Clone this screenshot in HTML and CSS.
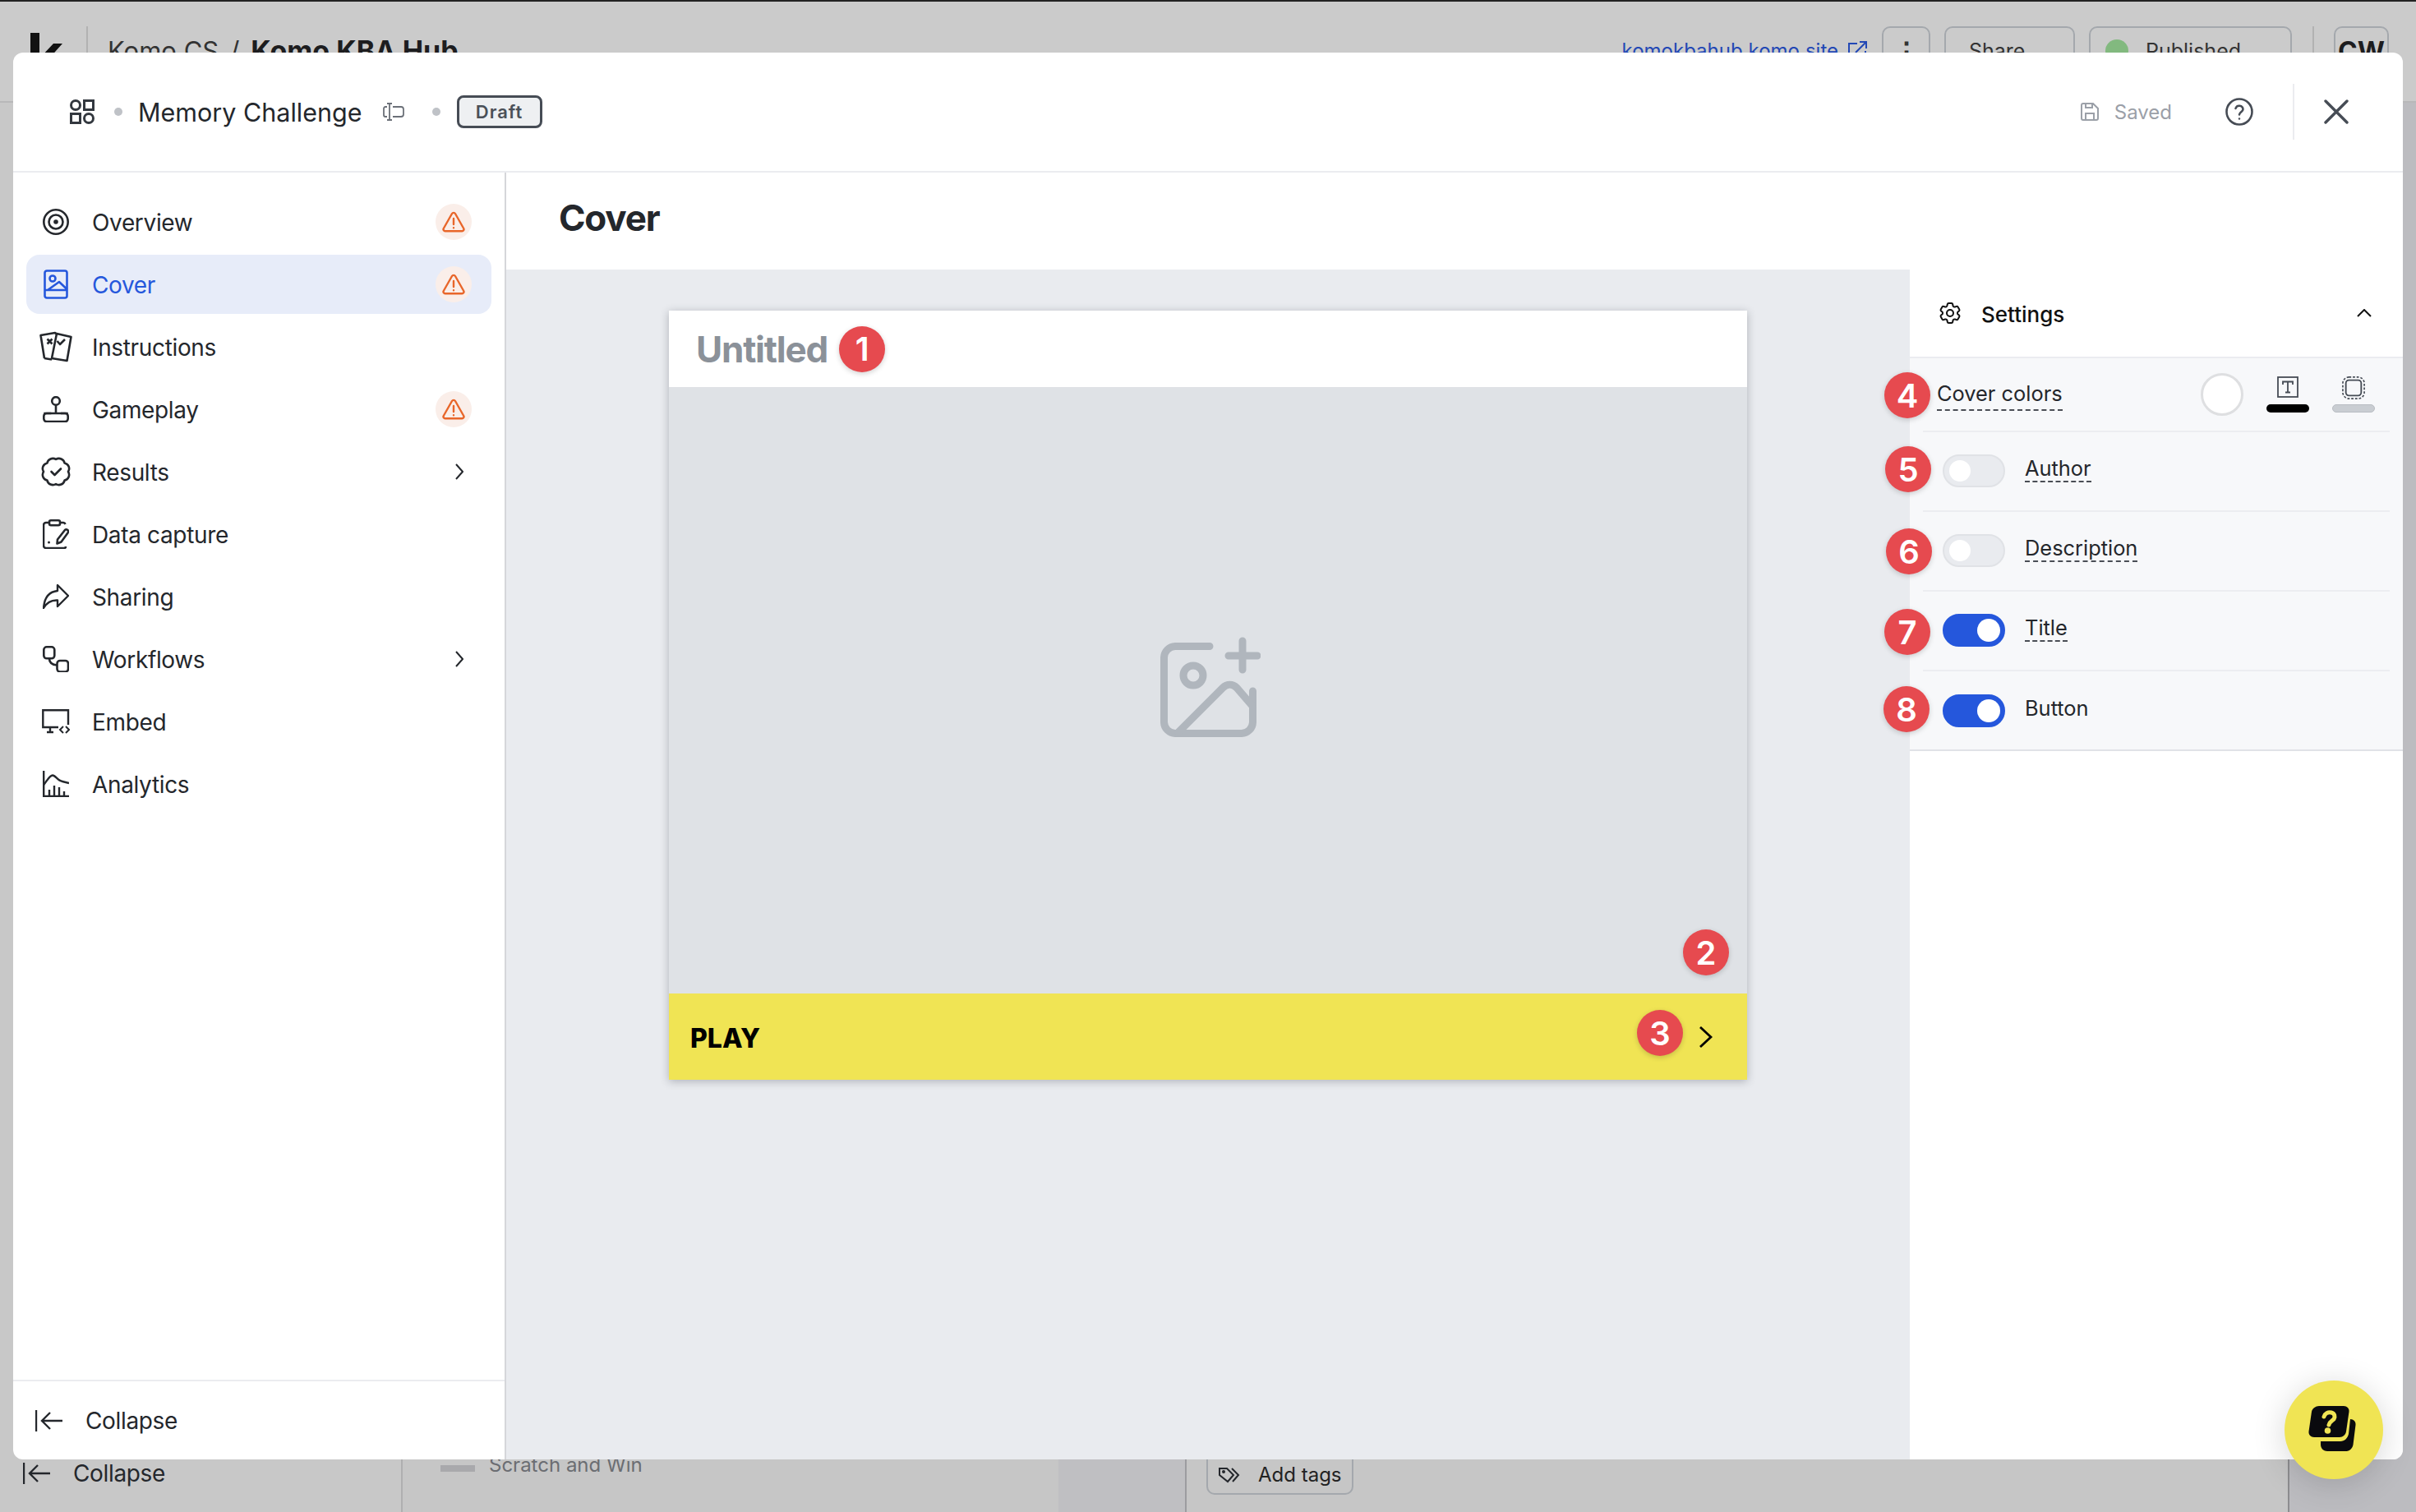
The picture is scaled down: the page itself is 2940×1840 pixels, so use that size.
FILE: index.html
```html
<!DOCTYPE html>
<html>

<head>
    <meta charset="UTF-8">
    <title>Memory Challenge - Cover</title>
    <link rel="stylesheet" href="styles.css">
</head>

<body>

<!-- page behind the dialog, dimmed -->
<div class="back">
    <div class="back-top">
        <svg class="back-logo" width="40" height="60" viewBox="0 0 40 60"><rect x="0" y="0" width="11" height="50" fill="#111"/><path d="M12 30 L28 13 L39 13 L22 32 L39 50 L28 50 Z" fill="#111"/></svg>
        <div class="back-divider"></div>
        <span class="crumb">Komo CS</span>
        <span class="crumb crumb-sep">/</span>
        <span class="crumb crumb-bold">Komo KBA Hub</span>
        <span class="back-link">komokbahub.komo.site</span>
        <svg class="back-ext" width="24" height="24" viewBox="0 0 24 24" fill="none" stroke="#2348b5" stroke-width="2"><path d="M12 3H2v20h20V12M10 14 22 2M15 1h8v8"/></svg>
        <div class="back-btn back-dots">⋮</div>
        <div class="back-btn back-share">Share</div>
        <div class="back-btn back-pub"><span class="pub-dot"></span>Published</div>
        <div class="back-divider back-divider-r"></div>
        <div class="back-btn back-cw">CW</div>
    </div>
    <div class="back-body">
        <div class="back-col back-side">
            <div class="collapse">
                <svg width="34" height="26" viewBox="0 0 34 26" fill="none" stroke="#24272c" stroke-width="2.4"><path d="M1 0v26M33 13H9M18 3 8 13l10 10"/></svg>
                <span>Collapse</span>
            </div>
        </div>
        <div class="back-col back-list">
            <span class="list-thumb"></span><span class="list-name">Scratch and Win</span>
        </div>
        <div class="back-col back-gap"></div>
        <div class="back-col back-main">
            <div class="add-tags">
                <svg width="26" height="20" viewBox="0 0 26 20" fill="none" stroke="#24272c" stroke-width="2"><path d="M1 2h9l8 8-7 8-10-8zM16 2l8 8-7 8"/><circle cx="6" cy="6" r="1" fill="#24272c"/></svg>
                <span>Add tags</span>
            </div>
        </div>
        <div class="back-col back-right"></div>
    </div>
</div>

<div class="modal">
    <div class="modal-head">
        <svg class="apps-icon" width="30" height="30" viewBox="0 0 30 30" fill="none" stroke="#33383f" stroke-width="3"><circle cx="7" cy="7" r="5.5"/><rect x="17.5" y="1.5" width="11" height="11"/><rect x="1.5" y="17.5" width="11" height="11"/><circle cx="23" cy="23" r="5.5"/></svg>
        <span class="head-dot"></span>
        <span class="game-name">Memory Challenge</span>
        <svg class="rename-icon" width="26" height="22" viewBox="0 0 26 22" fill="none" stroke="#6b7078" stroke-width="1.8"><path d="M5 5H3a2 2 0 0 0-2 2v8a2 2 0 0 0 2 2h2M12 5h10a3 3 0 0 1 3 3v6a3 3 0 0 1-3 3H12M5 1h6M8 1v20M5 21h6"/></svg>
        <span class="head-dot head-dot-2"></span>
        <span class="draft">Draft</span>
        <div class="head-right">
            <svg width="22" height="22" viewBox="0 0 22 22" fill="none" stroke="#9ba0a8" stroke-width="2"><path d="M1 3a2 2 0 0 1 2-2h12l6 6v12a2 2 0 0 1-2 2H3a2 2 0 0 1-2-2zM6 21v-8h10v8M6 1v5h8V1"/></svg>
            <span class="saved">Saved</span>
            <svg class="help-icon" width="34" height="34" viewBox="0 0 34 34" fill="none" stroke="#464c55" stroke-width="2.6"><circle cx="17" cy="17" r="15.5"/><path d="M12.5 13a4.6 4.6 0 0 1 9 1c0 3-4.500 3.500-4.500 6.500" stroke-linecap="round"/><circle cx="17" cy="25.500" r="1.200" fill="#464c55" stroke="none"/></svg>
            <div class="head-divider"></div>
            <svg class="close-icon" width="30" height="30" viewBox="0 0 30 30" fill="none" stroke="#464c55" stroke-width="3.4" stroke-linecap="round"><path d="M2 2l26 26M28 2 2 28"/></svg>
        </div>
    </div>

    <div class="modal-body">
        <div class="sidebar">
            <div class="nav">
                <div class="nav-row">
                    <span class="nav-icon"><svg width="32" height="32" viewBox="0 0 32 32" fill="none" stroke="#24272c" stroke-width="2.600"><circle cx="16" cy="16" r="14.700"/><circle cx="16" cy="16" r="8.500"/><circle cx="16" cy="16" r="2.800" fill="#24272c" stroke="none"/></svg></span>
                    <span class="nav-text">Overview</span>
                    <span class="warn"><svg width="28" height="26" viewBox="0 0 28 26" fill="none" stroke="#e8662a" stroke-width="2.400" stroke-linecap="round" stroke-linejoin="round"><path d="M12 3 1.800 21a2.200 2.200 0 0 0 2 3.300h20.400a2.200 2.200 0 0 0 2-3.300L16 3a2.300 2.300 0 0 0-4 0zM14 9v7M14 20.200v.1"/></svg></span>
                </div>
                <div class="nav-row nav-active">
                    <span class="nav-icon"><svg width="30" height="36" viewBox="0 0 30 36" fill="none" stroke="#2557dc" stroke-width="2.600" stroke-linejoin="round"><rect x="1.500" y="1.500" width="27" height="33" rx="2.500"/><circle cx="11" cy="11" r="3.500"/><path d="M1.500 25h27M5 25 19 15l9.500 9"/></svg></span>
                    <span class="nav-text">Cover</span>
                    <span class="warn"><svg width="28" height="26" viewBox="0 0 28 26" fill="none" stroke="#e8662a" stroke-width="2.400" stroke-linecap="round" stroke-linejoin="round"><path d="M12 3 1.800 21a2.200 2.200 0 0 0 2 3.300h20.400a2.200 2.200 0 0 0 2-3.300L16 3a2.300 2.300 0 0 0-4 0zM14 9v7M14 20.200v.1"/></svg></span>
                </div>
                <div class="nav-row">
                    <span class="nav-icon"><svg width="40" height="38" viewBox="0 0 40 38" fill="none" stroke="#24272c" stroke-width="2.600" stroke-linejoin="round"><path d="M6 33 1.500 5 19 2l2 2M21 3l17.500 4-5 29L15 33zM6 33l9 1.500"/><path d="M9.500 9.500l6 6M15.500 9.500l-6 6M21.500 12l3.500 4 6-6"/></svg></span>
                    <span class="nav-text">Instructions</span>
                </div>
                <div class="nav-row">
                    <span class="nav-icon"><svg width="32" height="32" viewBox="0 0 32 32" fill="none" stroke="#24272c" stroke-width="2.600"><circle cx="16" cy="6" r="4.800"/><path d="M16 11v9"/><rect x="1.300" y="21" width="29.400" height="10" rx="3.500"/><path d="M1.300 21h9M22 21h8.700"/></svg></span>
                    <span class="nav-text">Gameplay</span>
                    <span class="warn"><svg width="28" height="26" viewBox="0 0 28 26" fill="none" stroke="#e8662a" stroke-width="2.400" stroke-linecap="round" stroke-linejoin="round"><path d="M12 3 1.800 21a2.200 2.200 0 0 0 2 3.300h20.400a2.200 2.200 0 0 0 2-3.300L16 3a2.300 2.300 0 0 0-4 0zM14 9v7M14 20.200v.1"/></svg></span>
                </div>
                <div class="nav-row">
                    <span class="nav-icon"><svg width="36" height="36" viewBox="0 0 36 36" fill="none" stroke="#24272c" stroke-width="2.600" stroke-linejoin="round"><path d="M18 3A7 7 0 0 1 28.600 7.400A7 7 0 0 1 33 18A7 7 0 0 1 28.600 28.600A7 7 0 0 1 18 33A7 7 0 0 1 7.400 28.600A7 7 0 0 1 3 18A7 7 0 0 1 7.400 7.400A7 7 0 0 1 18 3Z"/><path d="M12.500 18l4 4 7.500-7.500" stroke-linecap="round"/></svg></span>
                    <span class="nav-text">Results</span>
                    <svg class="nav-chev" width="10" height="20" viewBox="0 0 10 20" fill="none" stroke="#24272c" stroke-width="2"><path d="M1 1l8 9-8 9"/></svg>
                </div>
                <div class="nav-row">
                    <span class="nav-icon"><svg width="32" height="36" viewBox="0 0 32 36" fill="none" stroke="#24272c" stroke-width="2.600" stroke-linejoin="round"><rect x="8" y="1.300" width="13" height="6" rx="2"/><path d="M8 4H4a3 3 0 0 0-3 3v25a3 3 0 0 0 3 3h22a2 2 0 0 0 2-2M21 4h4a3 3 0 0 1 2.500 2M1 33"/><path d="M27 13c2-2 5.500 1 3.500 3.500l-8 11-5 2 .5-5z"/><path d="M7.500 28v.1" stroke-linecap="round" stroke-width="3"/></svg></span>
                    <span class="nav-text">Data capture</span>
                </div>
                <div class="nav-row">
                    <span class="nav-icon"><svg width="32" height="30" viewBox="0 0 32 30" fill="none" stroke="#24272c" stroke-width="2.400" stroke-linejoin="round"><path d="M18 1v7C8 9 2 16 1 29c4-7 9-10 17-9.500V27L31 14z"/></svg></span>
                    <span class="nav-text">Sharing</span>
                </div>
                <div class="nav-row">
                    <span class="nav-icon"><svg width="32" height="32" viewBox="0 0 32 32" fill="none" stroke="#24272c" stroke-width="2.600"><rect x="1.300" y="1.300" width="13" height="14" rx="3.500"/><rect x="17.500" y="18" width="13.500" height="13.500" rx="3.500"/><path d="M8 15.500c0 5 3 7.500 9.500 8"/></svg></span>
                    <span class="nav-text">Workflows</span>
                    <svg class="nav-chev" width="10" height="20" viewBox="0 0 10 20" fill="none" stroke="#24272c" stroke-width="2"><path d="M1 1l8 9-8 9"/></svg>
                </div>
                <div class="nav-row">
                    <span class="nav-icon"><svg width="34" height="30" viewBox="0 0 34 30" fill="none" stroke="#24272c" stroke-width="2.400"><path d="M32 19V1.300H1.300V22H20M10 22V28M6 28h8"/><path d="M26 21l-4 4 4 4M29 21l4 4-4 4" stroke-width="2"/></svg></span>
                    <span class="nav-text">Embed</span>
                </div>
                <div class="nav-row">
                    <span class="nav-icon"><svg width="32" height="32" viewBox="0 0 32 32" fill="none" stroke="#24272c" stroke-width="2.400"><path d="M1.200 0v31h31"/><path d="M1.200 17C6 11 8.500 5.500 12 5.500S18 12 24 13l8 2"/><path d="M8 31v-8M14 31V18M20 31v-11M26 31v-6"/></svg></span>
                    <span class="nav-text">Analytics</span>
                </div>
            </div>
            <div class="side-foot">
                <svg width="34" height="26" viewBox="0 0 34 26" fill="none" stroke="#24272c" stroke-width="2.400"><path d="M1 0v26M33 13H9M18 3 8 13l10 10"/></svg>
                <span>Collapse</span>
            </div>
        </div>

        <div class="main">
            <div class="main-title">Cover</div>
            <div class="main-body">
                <div class="canvas">
                    <div class="card">
                        <div class="card-head">
                            <span class="card-title">Untitled</span>
                            <span class="num">1</span>
                        </div>
                        <div class="card-image">
                            <svg width="122" height="122" viewBox="0 0 122 122" fill="none" stroke="#b0b6bd" stroke-width="9" stroke-linecap="round" stroke-linejoin="round"><path d="M60 11.500H18A14 14 0 0 0 4.500 25V104A14 14 0 0 0 18 117.500H99A14 14 0 0 0 112.500 104V66"/><circle cx="40" cy="47" r="12"/><path d="M100 5V40M83 23H118"/><path d="M22 116 76 62c5-5 12-5 17 0L112 84"/></svg>
                            <span class="num num-2">2</span>
                        </div>
                        <div class="card-bar">
                            <span class="play">PLAY</span>
                            <span class="num num-3">3</span>
                            <svg width="16" height="26" viewBox="0 0 16 26" fill="none" stroke="#000" stroke-width="2.800"><path d="M1 1l13 12L1 25"/></svg>
                        </div>
                    </div>
                </div>

                <div class="panel">
                    <div class="panel-head">
                        <svg width="32" height="32" viewBox="0 0 24 24" fill="none" stroke="#111" stroke-width="1.500"><path d="M9.594 3.940c.09-.542.56-.94 1.110-.94h2.593c.55 0 1.020.398 1.110.94l.213 1.281c.063.374.313.686.645.87.074.04.147.083.22.127.325.196.72.257 1.075.124l1.217-.456a1.125 1.125 0 0 1 1.370.49l1.296 2.247a1.125 1.125 0 0 1-.26 1.431l-1.003.827c-.293.241-.438.613-.43.992a7.723 7.723 0 0 1 0 .255c-.008.378.137.75.43.991l1.004.827c.424.35.534.955.26 1.430l-1.298 2.247a1.125 1.125 0 0 1-1.369.491l-1.217-.456c-.355-.133-.75-.072-1.076.124a6.470 6.470 0 0 1-.22.128c-.331.183-.581.495-.644.869l-.213 1.281c-.09.543-.56.94-1.110.94h-2.594c-.55 0-1.019-.398-1.110-.94l-.213-1.281c-.062-.374-.312-.686-.644-.87a6.520 6.520 0 0 1-.22-.127c-.325-.196-.72-.257-1.076-.124l-1.217.456a1.125 1.125 0 0 1-1.369-.49l-1.297-2.247a1.125 1.125 0 0 1 .26-1.431l1.004-.827c.292-.24.437-.613.43-.991a6.932 6.932 0 0 1 0-.255c.007-.38-.138-.751-.43-.992l-1.004-.827a1.125 1.125 0 0 1-.26-1.430l1.297-2.247a1.125 1.125 0 0 1 1.370-.491l1.216.456c.356.133.751.072 1.076-.124.072-.044.146-.086.22-.128.332-.183.582-.495.644-.869l.214-1.280Z"/><circle cx="12" cy="12" r="3"/></svg>
                        <span class="panel-name">Settings</span>
                        <svg class="panel-chev" width="18" height="10" viewBox="0 0 18 10" fill="none" stroke="#111" stroke-width="2"><path d="M1 9l8-8 8 8"/></svg>
                    </div>
                    <div class="rows">
                        <div class="row row-colors">
                            <span class="num num-side num-4">4</span>
                            <span class="label label-dash">Cover colors</span>
                            <span class="swatch-circle"></span>
                            <div class="swatch">
                                <svg width="26" height="26" viewBox="0 0 26 26" fill="none" stroke="#464c55" stroke-width="1.800"><rect x="1" y="1" width="24" height="24"/><path d="M7 10V6.500h12V10M13 6.500v13M10 19.500h6"/></svg>
                                <span class="swatch-bar"></span>
                            </div>
                            <div class="swatch">
                                <svg width="28" height="28" viewBox="0 0 30 30" fill="none" stroke="#464c55"><rect x="1" y="1" width="28" height="28" rx="8" stroke-width="1.800" stroke-dasharray="3 2"/><rect x="5" y="5" width="20" height="20" rx="4" stroke-width="2"/></svg>
                                <span class="swatch-bar swatch-bar-grey"></span>
                            </div>
                        </div>
                        <div class="row">
                            <span class="num num-side num-5">5</span>
                            <span class="toggle"><span class="knob"></span></span>
                            <span class="label label-dash">Author</span>
                        </div>
                        <div class="row">
                            <span class="num num-side num-6">6</span>
                            <span class="toggle"><span class="knob"></span></span>
                            <span class="label label-dash">Description</span>
                        </div>
                        <div class="row">
                            <span class="num num-side num-7">7</span>
                            <span class="toggle toggle-on"><span class="knob"></span></span>
                            <span class="label label-dash">Title</span>
                        </div>
                        <div class="row row-last">
                            <span class="num num-side num-8">8</span>
                            <span class="toggle toggle-on"><span class="knob"></span></span>
                            <span class="label">Button</span>
                        </div>
                    </div>
                </div>
            </div>
        </div>
    </div>
</div>

<!-- help bubble -->
<div class="fab">
    <svg width="64" height="64" viewBox="0 0 64 64"><path d="M14 4h30c4 0 7 3 6.500 7l-3.500 24c-.6 4-4 7-8 7H8c-4 0-7-3-6.500-7L5 11c.6-4 5-7 9-7z" fill="#0a0a0e" transform="translate(0 -1)"/><path d="M52 19c4 0 7 3 6.500 7l-3 24c-.6 4-4 8-8 8H24c-4 0-8-3-8-8v-4h24c5 0 9-4 10-9z" fill="#0a0a0e"/><path d="M20 16c1-4 5-6 9-5 4 1 5 5 3 8-2 2-5 3-6 7" fill="none" stroke="#f0e454" stroke-width="5" stroke-linecap="round"/><circle cx="24.500" cy="33" r="3.800" fill="#f0e454"/></svg>
</div>

</body>

</html>
```
FILE: styles.css
```css
* {
    box-sizing: border-box;
}

html, body {
    margin: 0;
    width: 2940px;
    height: 1840px;
    overflow: hidden;
}

body {
    position: relative;
    background: #c8c8c8;
    font-family: Inter, "Noto Sans", sans-serif;
    color: #24272c;
}

/* page behind */
.back {
    height: 1840px;
    display: flex;
    flex-direction: column;
}

.back-top {
    height: 125px;
    flex: none;
    display: flex;
    align-items: flex-start;
    background: #cbcbcb;
    border-top: 2px solid #222;
    border-bottom: 2px solid #b8b8b9;
    padding: 30px 33px 0 37px;
}

.back-logo {
    margin-top: 8px;
}

.back-divider {
    width: 2px;
    height: 60px;
    background: #b2b2b2;
    margin-left: 28px;
}

.crumb {
    font-size: 31px;
    line-height: 60px;
    margin-left: 24px;
    color: #333;
}

.crumb-sep {
    margin-left: 14px;
}

.crumb-bold {
    margin-left: 14px;
    font-size: 34px;
    font-weight: 700;
    color: #1d1d1f;
}

.back-link {
    margin-left: auto;
    font-size: 24px;
    line-height: 60px;
    color: #2348b5;
}

.back-ext {
    margin: 18px 18px 0 11px;
}

.back-btn {
    height: 60px;
    border: 2px solid #a4a8ad;
    border-radius: 10px;
    font-size: 25px;
    display: flex;
    align-items: center;
    justify-content: center;
    color: #333;
}

.back-dots {
    width: 59px;
    font-size: 34px;
    font-weight: 700;
    margin-right: 17px;
}

.back-share {
    width: 159px;
    margin-right: 17px;
    justify-content: flex-start;
    padding-left: 28px;
}

.back-pub {
    width: 247px;
    justify-content: flex-start;
    padding-left: 18px;
    gap: 21px;
}

.pub-dot {
    width: 28px;
    height: 28px;
    border-radius: 50%;
    background: #82b97f;
}

.back-divider-r {
    margin-left: 25px;
    margin-right: 24px;
}

.back-cw {
    width: 67px;
    font-size: 32px;
    font-weight: 700;
    color: #1d1d1f;
}

.back-body {
    flex: 1;
    display: flex;
}

.back-col {
    height: 100%;
    display: flex;
    align-items: flex-end;
}

.back-side {
    width: 490px;
    background: #c8c8c8;
    border-right: 2px solid #afafb0;
}

.collapse {
    display: flex;
    align-items: center;
    gap: 27px;
    height: 40px;
    margin: 0 0 27px 28px;
    font-size: 28px;
    letter-spacing: -.35px;
}

.back-list {
    width: 798px;
    background: #c6c6c6;
    padding: 0 0 37px 46px;
}

.list-thumb {
    width: 42px;
    height: 8px;
    background: #a9a9ac;
    margin: 0 17px 12px 0;
}

.list-name {
    font-size: 24px;
    line-height: 40px;
    color: #6b6d72;
}

.back-gap {
    width: 156px;
    background: #bfbfc2;
    border-right: 2px solid #9c9ca0;
}

.back-main {
    width: 1342px;
    background: #c6c6c6;
    border-right: 2px solid #8d8d90;
    padding: 0 0 21px 24px;
}

.add-tags {
    width: 179px;
    height: 60px;
    border: 2px solid #a4a8ad;
    border-radius: 10px;
    display: flex;
    align-items: flex-end;
    gap: 22px;
    padding: 0 0 8px 13px;
    font-size: 24px;
    color: #222;
}

.add-tags svg {
    margin-bottom: 4px;
}

.back-right {
    flex: 1;
    background: #bcbcc0;
}

/* dialog */
.modal {
    position: absolute;
    left: 16px;
    top: 64px;
    width: 2908px;
    height: 1712px;
    background: #fff;
    border-radius: 12px;
    overflow: hidden;
    display: flex;
    flex-direction: column;
}

.modal-head {
    height: 146px;
    flex: none;
    display: flex;
    align-items: center;
    padding-left: 69px;
    border-bottom: 2px solid #ebecf0;
}

.head-dot {
    width: 10px;
    height: 10px;
    border-radius: 50%;
    background: #bfc2c7;
    margin-left: 24px;
}

.game-name {
    font-size: 30.500px;
    margin-left: 19px;
    color: #24272c;
}

.rename-icon {
    margin-left: 25px;
}

.head-dot-2 {
    margin-left: 34px;
}

.draft {
    width: 104px;
    height: 40px;
    margin-left: 20px;
    border: 3px solid #464c55;
    border-radius: 8px;
    background: #eef0f2;
    color: #4a5058;
    font-size: 22px;
    font-weight: 600;
    letter-spacing: 1px;
    display: flex;
    align-items: center;
    justify-content: center;
}

.head-right {
    margin-left: auto;
    display: flex;
    align-items: center;
    height: 68px;
}

.saved {
    font-size: 24px;
    color: #9ba0a8;
    margin-left: 19px;
}

.help-icon {
    margin-left: 65px;
}

.head-divider {
    width: 2px;
    height: 68px;
    background: #ebecf0;
    margin-left: 48px;
}

.close-icon {
    margin: 0 66px 0 36px;
}

.modal-body {
    flex: 1;
    display: flex;
    min-height: 0;
}

.sidebar {
    width: 600px;
    flex: none;
    display: flex;
    flex-direction: column;
    border-right: 2px solid #d5d6da;
}

.nav {
    flex: 1;
    padding: 24px 16px 0;
}

.nav-row {
    height: 72px;
    margin-bottom: 4px;
    border-radius: 16px;
    display: flex;
    align-items: center;
    padding: 0 24px 0 14px;
    font-size: 28px;
    letter-spacing: -.35px;
}

.nav-active {
    background: #e7ecf9;
    color: #2557dc;
}

.nav-icon {
    width: 44px;
    flex: none;
    display: flex;
    justify-content: center;
}

.nav-text {
    margin-left: 22px;
    padding-top: 2px;
}

.warn {
    width: 44px;
    height: 44px;
    margin-left: auto;
    border-radius: 50%;
    background: #faeee9;
    display: flex;
    align-items: center;
    justify-content: center;
}

.nav-chev {
    margin: 0 10px 0 auto;
}

.side-foot {
    height: 97px;
    flex: none;
    border-top: 2px solid #ebecf0;
    display: flex;
    align-items: center;
    gap: 27px;
    padding-left: 27px;
    font-size: 28px;
    letter-spacing: -.35px;
}

.main {
    flex: 1;
    display: flex;
    flex-direction: column;
    min-width: 0;
}

.main-title {
    height: 118px;
    flex: none;
    padding-left: 64px;
    font-size: 44px;
    font-weight: 700;
    letter-spacing: -1.200px;
    line-height: 110px;
    color: #24272c;
}

.main-body {
    flex: 1;
    display: flex;
    min-height: 0;
}

.canvas {
    width: 1708px;
    flex: none;
    background: #e9ebef;
    padding: 50px 0 0 198px;
}

.card {
    position: relative;
    width: 1312px;
    box-shadow: 0 2px 10px rgba(40, 45, 60, .3);
}

.card-head {
    height: 93px;
    background: #fff;
    display: flex;
    align-items: center;
    padding-left: 33px;
    gap: 14px;
}

.card-title {
    font-size: 44px;
    font-weight: 700;
    letter-spacing: -1.200px;
    color: #8b9199;
}

.card-image {
    position: relative;
    height: 738px;
    background: #dfe2e6;
    display: flex;
    align-items: center;
    justify-content: center;
    padding: 0 0 8px 6px;
}

.card-bar {
    position: relative;
    height: 105px;
    background: #f0e454;
    display: flex;
    align-items: center;
    justify-content: space-between;
    padding: 0 42px 0 26px;
}

.play {
    font-size: 32px;
    font-weight: 800;
    color: #000;
    padding-top: 4px;
}

/* red numbered callouts */
.num {
    width: 56px;
    height: 56px;
    flex: none;
    border-radius: 50%;
    background: #e64a4f;
    box-shadow: 0 2px 6px rgba(0, 0, 0, .18);
    color: #fff;
    font-size: 40px;
    font-weight: 600;
    display: flex;
    align-items: center;
    justify-content: center;
}

.num-2 {
    position: absolute;
    right: 22px;
    bottom: 22px;
}

.num-3 {
    position: absolute;
    right: 78px;
    top: 20px;
}

.panel {
    flex: 1;
    background: #fff;
}

.panel-head {
    height: 108px;
    display: flex;
    align-items: center;
    padding: 0 38px 0 33px;
    border-bottom: 2px solid #ebecf0;
}

.panel-name {
    margin-left: 22px;
    padding-top: 3px;
    font-size: 26px;
    font-weight: 500;
    color: #111;
}

.panel-chev {
    margin-left: auto;
}

.rows {
    background: #f7f8fa;
    border-bottom: 2px solid #e0e2e7;
    padding: 0 16px;
}

.row {
    position: relative;
    height: 97px;
    display: flex;
    align-items: center;
    gap: 24px;
    padding: 0 0 1px 24px;
    border-bottom: 2px solid #ecedf1;
}

.row-colors {
    height: 90px;
    padding: 0 18px 0 17px;
    gap: 28px;
}

.row-last {
    height: 95px;
    padding-bottom: 0;
    border-bottom: none;
}

.num-side {
    position: absolute;
}

.num-4 {
    left: -47px;
    top: 17px;
}

.num-5 {
    left: -46px;
    top: 17px;
}

.num-6 {
    left: -45px;
    top: 20px;
}

.num-7 {
    left: -47px;
    top: 21px;
}

.num-8 {
    left: -48px;
    top: 18px;
}

.label {
    font-size: 25.400px;
    line-height: 30px;
    margin-bottom: 5px;
    color: #24272c;
}

.label-dash {
    border-bottom: 2px dashed #4a4e55;
}

.row-colors .label {
    padding-bottom: 4px;
    margin: 4px auto 0 0;
}

.swatch-circle {
    width: 52px;
    height: 52px;
    border-radius: 50%;
    background: #fff;
    border: 3px solid #dedfe1;
}

.swatch {
    width: 52px;
    height: 44px;
    display: flex;
    flex-direction: column;
    align-items: center;
    justify-content: space-between;
}

.swatch-bar {
    width: 52px;
    height: 10px;
    flex: none;
    border-radius: 5px;
    background: #000;
}

.swatch-bar-grey {
    background: #c9cdd2;
    border: 1px solid #b9bdc3;
}

.toggle {
    width: 76px;
    height: 40px;
    flex: none;
    border-radius: 20px;
    background: #e9ebef;
    border: 2px solid #e0e2e6;
    display: flex;
    align-items: center;
    padding-left: 6px;
}

.knob {
    width: 26px;
    height: 26px;
    border-radius: 50%;
    background: #fff;
}

.toggle-on {
    background: #2557dc;
    border-color: #2557dc;
    justify-content: flex-end;
    padding: 0 4px 0 0;
}

.toggle-on .knob {
    width: 28px;
    height: 28px;
}

.fab {
    position: absolute;
    left: 2780px;
    top: 1680px;
    width: 120px;
    height: 120px;
    border-radius: 50%;
    background: #f0e454;
    box-shadow: 0 6px 40px rgba(0, 0, 0, .16);
    display: flex;
    align-items: center;
    justify-content: center;
}
```
